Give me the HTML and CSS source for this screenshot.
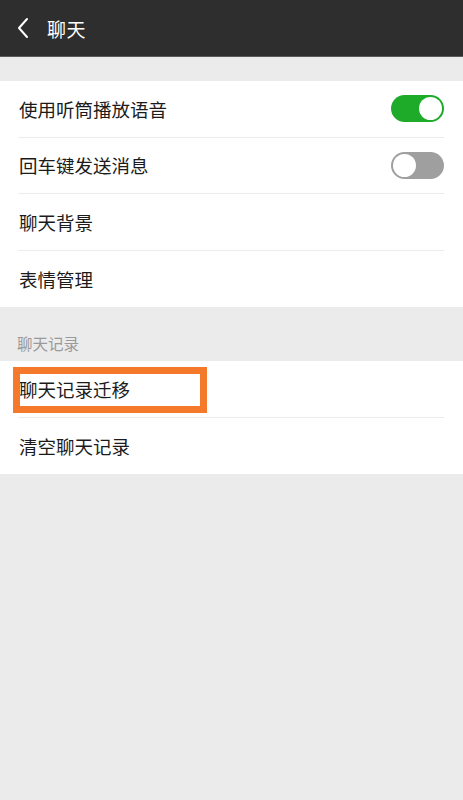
FILE: index.html
```html
<!DOCTYPE html>
<html lang="zh-CN">
<head>
<meta charset="utf-8">
<title>聊天</title>
<link rel="stylesheet" href="styles.css">
</head>
<body>
<header class="topbar">
  <svg class="back" width="14" height="22" viewBox="0 0 14 22"><path d="M11 2 L3 11 L11 20" fill="none" stroke="#ffffff" stroke-width="2" stroke-linecap="round" stroke-linejoin="round"/></svg>
  <span class="title">聊天</span>
</header>
<div class="gap"></div>
<section class="group">
  <div class="row"><span class="label">使用听筒播放语音</span><span class="switch on"><span class="knob"></span></span></div>
  <div class="row"><span class="label">回车键发送消息</span><span class="switch off"><span class="knob"></span></span></div>
  <div class="row"><span class="label">聊天背景</span></div>
  <div class="row last"><span class="label">表情管理</span></div>
</section>
<div class="section-title">聊天记录</div>
<section class="group">
  <div class="row highlight"><span class="label">聊天记录迁移</span><span class="mark"></span></div>
  <div class="row last"><span class="label">清空聊天记录</span></div>
</section>
</body>
</html>
```
FILE: styles.css
```css
html, body {
  margin: 0;
  padding: 0;
  background: #ebebeb;
  font-family: "Noto Sans CJK SC", "Noto Sans", sans-serif;
  height: 100%;
}
.topbar {
  height: 56px;
  background: #2e2e2e;
  border-bottom: 1px solid #5a5a5a;
  display: flex;
  align-items: center;
  padding-left: 16px;
}
.back {
  display: block;
  margin-top: 0;
}
.title {
  color: #ffffff;
  font-size: 19px;
  margin-left: 17px;
  letter-spacing: 0.5px;
}
.gap {
  height: 24px;
}
.group {
  background: #ffffff;
  padding-left: 18px;
}
.row {
  position: relative;
  height: 56.5px;
  box-sizing: border-box;
  border-bottom: 1px solid #ececec;
  margin-right: 19px;
  display: flex;
  align-items: center;
  justify-content: space-between;
}
.row.last {
  border-bottom: none;
}
.label {
  font-size: 18.5px;
  color: #1b1b1b;
  padding-left: 1px;
}
.switch {
  position: relative;
  width: 53px;
  height: 27px;
  border-radius: 14px;
  box-sizing: border-box;
}
.switch.on {
  background: #1fab2a;
}
.switch.off {
  background: #9f9f9f;
}
.knob {
  position: absolute;
  top: 2px;
  width: 23px;
  height: 23px;
  border-radius: 50%;
  background: #ffffff;
}
.switch.on .knob {
  right: 2px;
}
.switch.off .knob {
  left: 2px;
}
.section-title {
  height: 54px;
  box-sizing: border-box;
  padding: 25px 0 0 17px;
  font-size: 15.5px;
  color: #9a9a9a;
}
.mark {
  position: absolute;
  left: -5px;
  top: 6px;
  width: 194px;
  height: 46px;
  box-sizing: border-box;
  border: 7px solid #f5792a;
}
```
